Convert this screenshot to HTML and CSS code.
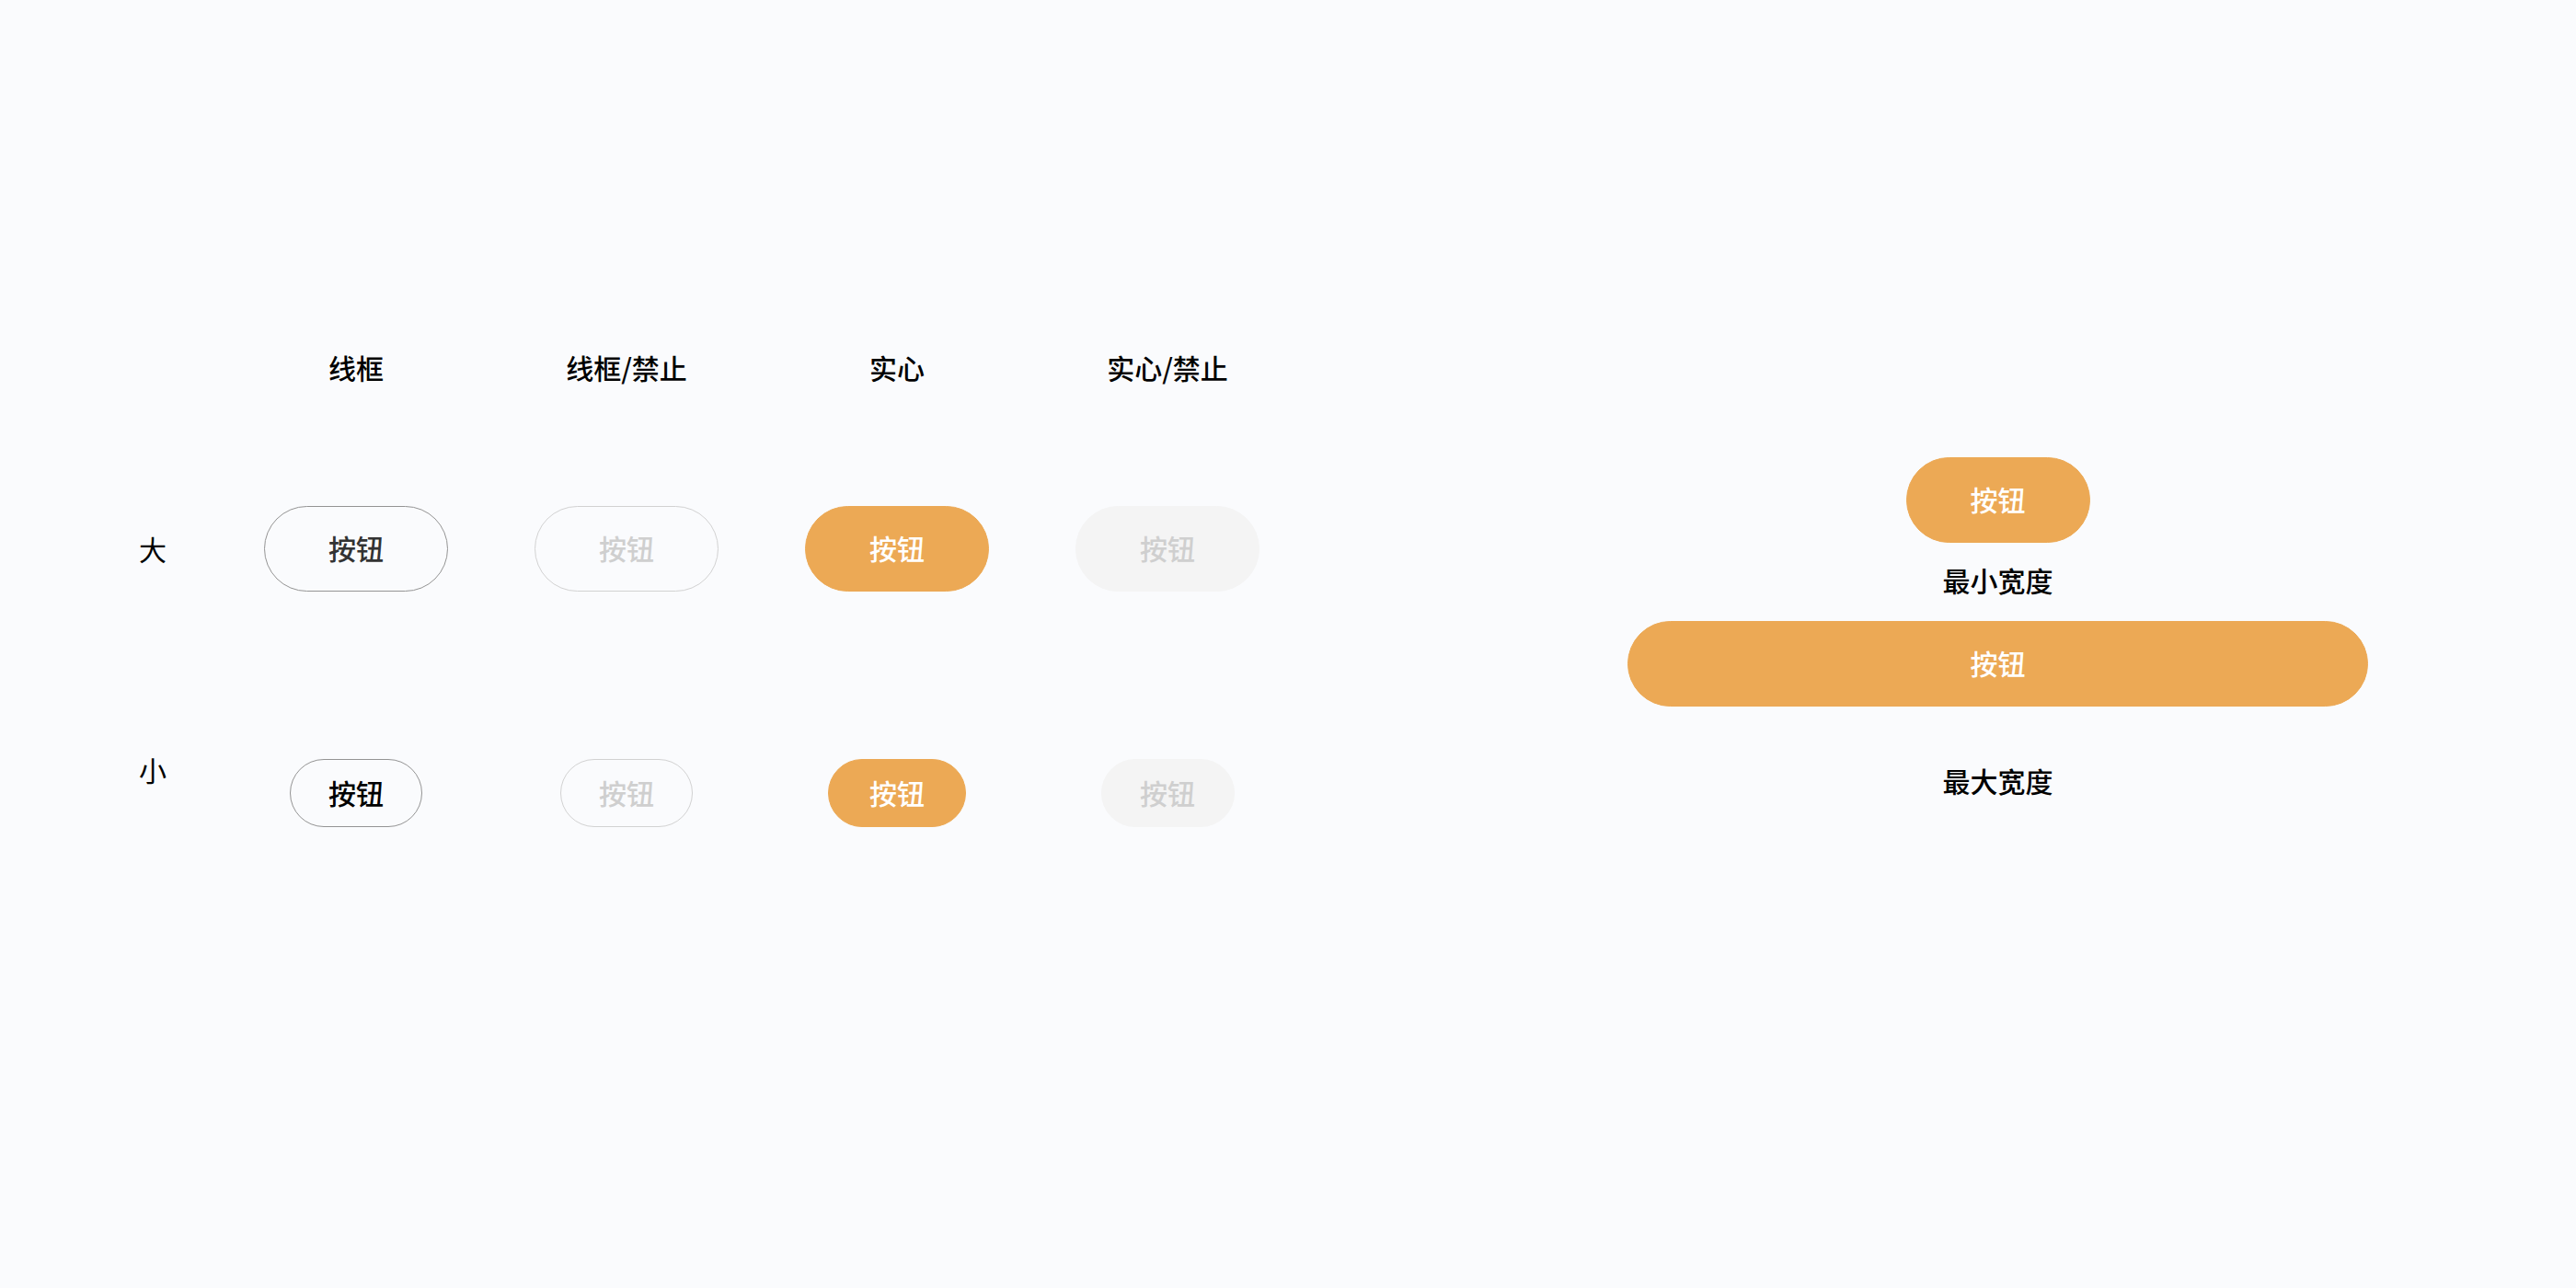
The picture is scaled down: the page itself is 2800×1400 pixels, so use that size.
FILE: index.html
```html
<!DOCTYPE html>
<html lang="zh-CN">
<head>
    <meta charset="UTF-8">
    <meta name="viewport" content="width=device-width, initial-scale=1.0">
    <title>按钮</title>
    <link rel="stylesheet" href="styles.css">
</head>
<body>
    <div class="page">
        <div class="matrix">
            <div class="row row-head">
                <div class="label"></div>
                <div class="cell">线框</div>
                <div class="cell">线框/禁止</div>
                <div class="cell">实心</div>
                <div class="cell">实心/禁止</div>
            </div>
            <div class="row row-large">
                <div class="label">大</div>
                <div class="cell"><button class="btn large outline">按钮</button></div>
                <div class="cell"><button class="btn large outline disabled">按钮</button></div>
                <div class="cell"><button class="btn large solid">按钮</button></div>
                <div class="cell"><button class="btn large solid disabled">按钮</button></div>
            </div>
            <div class="row row-small">
                <div class="label label-top">小</div>
                <div class="cell"><button class="btn small outline">按钮</button></div>
                <div class="cell"><button class="btn small outline disabled">按钮</button></div>
                <div class="cell"><button class="btn small solid">按钮</button></div>
                <div class="cell"><button class="btn small solid disabled">按钮</button></div>
            </div>
        </div>
        <div class="widths">
            <button class="btn large solid min">按钮</button>
            <div class="caption">最小宽度</div>
            <button class="btn large solid max">按钮</button>
            <div class="caption caption-far">最大宽度</div>
        </div>
    </div>
</body>
</html>
```
FILE: styles.css
```css
body {
    margin: 0;
    padding: 0;
    background: #fafbfd;
    color: #000;
    font-family: "Noto Sans CJK SC", "Noto Sans", sans-serif;
    font-size: 30px;
    line-height: 42px;
    width: 2800px;
    height: 1400px;
    overflow: hidden;
}
.page {
    display: flex;
    align-items: flex-start;
    gap: 353px;
    padding-left: 151px;
}
.matrix {
    display: flex;
    flex-direction: column;
    margin-top: 378px;
}
.row {
    display: grid;
    grid-template-columns: 89px repeat(4, 294px);
    align-items: center;
}
.row-head .cell {
    font-weight: 500;
}
.row-large {
    margin-top: 130px;
}
.row-small {
    margin-top: 182px;
}
.label {
    font-weight: 400;
    padding-bottom: 2px;
}
.label-top {
    align-self: start;
    margin-top: -10px;
}
.cell {
    display: flex;
    justify-content: center;
    text-align: center;
}
.btn {
    display: flex;
    align-items: center;
    justify-content: center;
    box-sizing: border-box;
    padding: 0 0 3px 0;
    border: 1px solid transparent;
    font-family: inherit;
    font-size: 30px;
    font-weight: 500;
    line-height: 42px;
    cursor: pointer;
}
.btn.large {
    width: 200px;
    height: 93px;
    border-radius: 47px;
}
.btn.small {
    width: 144px;
    height: 74px;
    border-radius: 37px;
}
.btn.small.solid {
    width: 150px;
}
.btn.small.solid.disabled {
    width: 145px;
}
.btn.outline {
    background: transparent;
    border-color: #949494;
    color: #333;
}
.btn.small.outline {
    color: #000;
}
.btn.outline.disabled {
    border-color: #d2d2d2;
    color: #cfcfcf;
    cursor: default;
}
.btn.solid {
    background: #eca955;
    border-color: #eca955;
    color: #fff;
}
.btn.solid.disabled {
    background: #f4f4f4;
    border-color: #f4f4f4;
    color: #cfcfcf;
    cursor: default;
}
.widths {
    display: flex;
    flex-direction: column;
    align-items: center;
    width: 805px;
    margin-top: 497px;
}
.btn.max {
    width: 805px;
    margin-top: 24px;
}
.caption {
    font-weight: 500;
    margin-top: 19px;
}
.caption-far {
    margin-top: 59px;
}
```
